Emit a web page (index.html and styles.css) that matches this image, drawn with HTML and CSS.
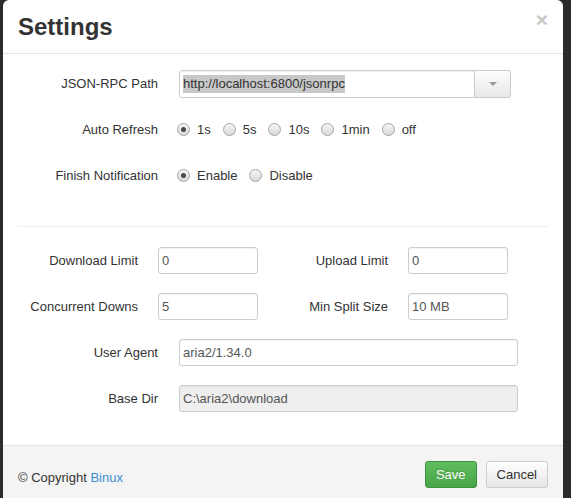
FILE: index.html
```html
<!DOCTYPE html>
<html>
<head>
<meta charset="utf-8">
<title>Settings</title>
<link rel="stylesheet" href="styles.css">
</head>
<body>
<div class="modal">
  <div class="modal-header">
    <h4 class="modal-title">Settings</h4>
    <span class="close">×</span>
  </div>
  <div class="modal-body">
    <div class="form">
      <div class="row">
        <label class="label">JSON-RPC Path</label>
        <div class="input-group">
          <div class="input input-rpc"><span class="selected">http://localhost:6800/jsonrpc</span></div>
          <span class="dropdown-btn"><span class="caret"></span></span>
        </div>
      </div>
      <div class="row">
        <label class="label">Auto Refresh</label>
        <div class="radios">
          <span class="radio checked"><span class="dot"></span>1s</span>
          <span class="radio"><span class="dot"></span>5s</span>
          <span class="radio"><span class="dot"></span>10s</span>
          <span class="radio"><span class="dot"></span>1min</span>
          <span class="radio"><span class="dot"></span>off</span>
        </div>
      </div>
      <div class="row last">
        <label class="label">Finish Notification</label>
        <div class="radios notif">
          <span class="radio checked"><span class="dot"></span>Enable</span>
          <span class="radio"><span class="dot"></span>Disable</span>
        </div>
      </div>
    </div>
    <hr class="divider">
    <div class="form">
      <div class="row">
        <div class="half">
          <label class="label label-half">Download Limit</label>
          <div class="input input-small">0</div>
        </div>
        <div class="half">
          <label class="label label-half">Upload Limit</label>
          <div class="input input-small">0</div>
        </div>
      </div>
      <div class="row">
        <div class="half">
          <label class="label label-half">Concurrent Downs</label>
          <div class="input input-small">5</div>
        </div>
        <div class="half">
          <label class="label label-half">Min Split Size</label>
          <div class="input input-small">10 MB</div>
        </div>
      </div>
      <div class="row">
        <label class="label">User Agent</label>
        <div class="input input-wide">aria2/1.34.0</div>
      </div>
      <div class="row last">
        <label class="label">Base Dir</label>
        <div class="input input-wide disabled">C:\aria2\download</div>
      </div>
    </div>
  </div>
  <div class="modal-footer">
    <div class="copyright">© Copyright <a href="#" class="link">Binux</a></div>
    <div class="buttons">
      <button class="btn btn-success">Save</button>
      <button class="btn btn-default">Cancel</button>
    </div>
  </div>
</div>
</body>
</html>
```
FILE: styles.css
```css
* {
  box-sizing: border-box;
}

html,
body {
  margin: 0;
  height: 100%;
}

body {
  background: #2b2b2b;
  font-family: "Liberation Sans", Arial, sans-serif;
  font-size: 13px;
  color: #333;
  overflow: hidden;
}

.modal {
  margin-left: 3px;
  width: 560px;
  height: 498px;
  background: #fff;
  border-radius: 6px 6px 0 0;
  display: flex;
  flex-direction: column;
  overflow: hidden;
}

.modal-header {
  height: 54px;
  flex: none;
  border-bottom: 1px solid #e5e5e5;
  padding: 12px 15px;
  display: flex;
  justify-content: space-between;
  align-items: flex-start;
}

.modal-title {
  margin: 0;
  font-size: 24px;
  line-height: 29px;
  font-weight: bold;
  color: #333;
}

.close {
  font-size: 21px;
  font-weight: bold;
  line-height: 21px;
  color: #c8c8c8;
  margin-top: -3px;
}

.modal-body {
  height: 391px;
  flex: none;
  padding: 16px 15px 0;
}

.form {
  width: 500px;
}

.row {
  display: flex;
  align-items: center;
  height: 27px;
  margin-bottom: 19px;
}

.row.last {
  margin-bottom: 0;
}

.label {
  width: 140px;
  flex: none;
  text-align: right;
  margin-right: 21px;
  color: #333;
}

.half {
  width: 250px;
  display: flex;
  align-items: center;
}

.label-half {
  width: 120px;
  margin-right: 20px;
}

.input {
  height: 27px;
  border: 1px solid #ccc;
  border-radius: 3px;
  padding: 0 3px;
  line-height: 25px;
  color: #555;
  background: #fff;
  box-shadow: inset 0 1px 1px rgba(0, 0, 0, 0.06);
  white-space: nowrap;
}

.input-small {
  width: 100px;
}

.input-wide {
  width: 339px;
}

.input.disabled {
  background: #eee;
}

.input-group {
  display: flex;
  width: 332px;
  height: 28px;
}

.input-rpc {
  flex: 1;
  height: 28px;
  line-height: 26px;
  border-radius: 3px 0 0 3px;
  color: #333;
}

.selected {
  background: #c8c8c8;
  padding: 1px 0 2px;
}

.dropdown-btn {
  width: 36px;
  height: 28px;
  border: 1px solid #ccc;
  border-left: 0;
  border-radius: 0 3px 3px 0;
  background: linear-gradient(#fcfcfc, #e8e8e8);
  display: flex;
  align-items: center;
  justify-content: center;
}

.caret {
  width: 0;
  height: 0;
  border-top: 4px solid #9a9a9a;
  border-left: 4px solid transparent;
  border-right: 4px solid transparent;
}

.radios {
  display: flex;
  align-items: center;
  margin-left: -2px;
}

.radio {
  display: flex;
  align-items: center;
  margin-right: 12px;
  color: #333;
}

.notif .radio {
  margin-right: 12px;
}

.dot {
  width: 13px;
  height: 13px;
  border-radius: 50%;
  border: 1px solid #a4a4a4;
  background: linear-gradient(#f6f6f6, #d9d9d9);
  margin-right: 7px;
  display: flex;
  align-items: center;
  justify-content: center;
}

.radio.checked .dot::after {
  content: "";
  width: 5px;
  height: 5px;
  border-radius: 50%;
  background: #4a4a4a;
}

.divider {
  margin: 37px 0 20px;
  border: 0;
  border-top: 1px solid #eee;
  height: 0;
}

.modal-footer {
  flex: 1;
  background: #f4f4f4;
  border-top: 1px solid #e5e5e5;
  padding: 15px;
  display: flex;
  justify-content: space-between;
  align-items: flex-start;
}

.copyright {
  padding-top: 8px;
  line-height: 18px;
  color: #333;
}

.link {
  color: #3a8dd0;
  text-decoration: none;
}

.buttons {
  display: flex;
  gap: 9px;
}

.btn {
  height: 27px;
  padding: 0 10px;
  font-family: "Liberation Sans", Arial, sans-serif;
  font-size: 13px;
  line-height: 25px;
  border-radius: 3px;
  cursor: pointer;
}

.btn-success {
  color: #fff;
  background: linear-gradient(#5fbd5f, #47a447);
  border: 1px solid #3e8f3e;
  text-shadow: 0 -1px 0 rgba(0, 0, 0, 0.15);
}

.btn-default {
  color: #333;
  background: linear-gradient(#fff, #e6e6e6);
  border: 1px solid #ccc;
}
```
